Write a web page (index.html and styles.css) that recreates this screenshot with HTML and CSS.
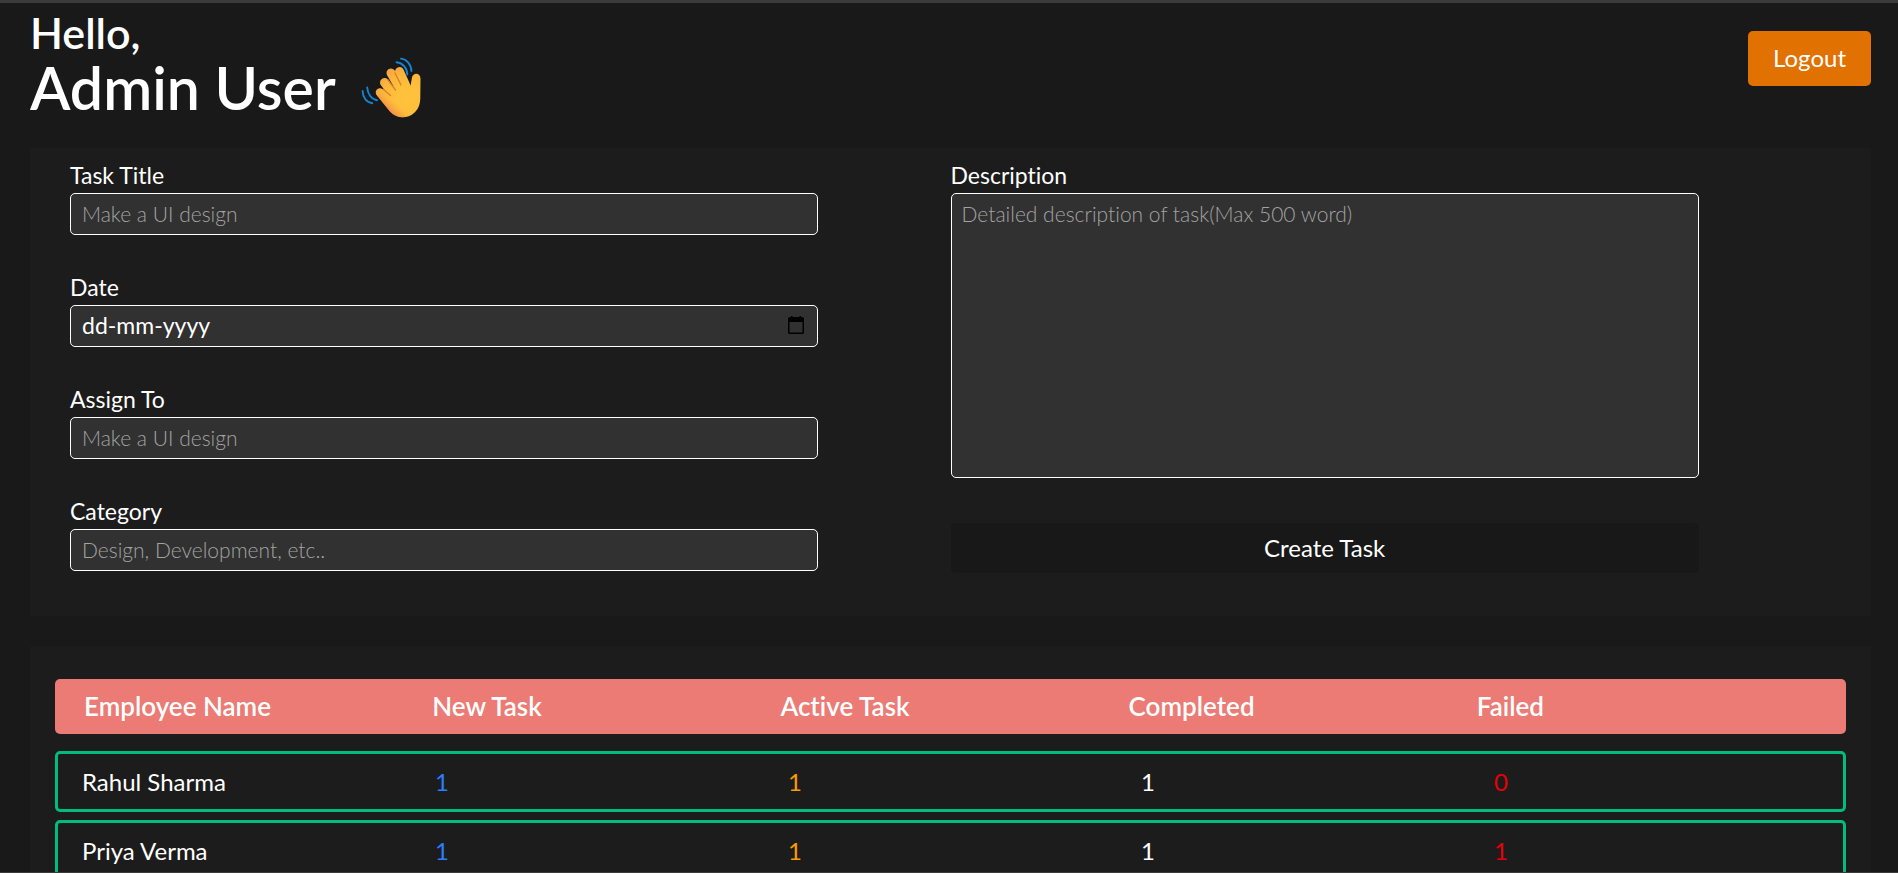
FILE: index.html
```html
<!DOCTYPE html>
<html lang="en">
<head>
<meta charset="utf-8">
<title>Admin Dashboard</title>
<link rel="stylesheet" href="styles.css">
</head>
<body>
<header class="header">
  <h1 class="greeting">
    <span class="greeting-hello">Hello,</span>
    <span class="greeting-name">Admin User
      <svg class="wave" viewBox="0 0 60 62" aria-hidden="true">
        <defs>
          <radialGradient id="palm" gradientUnits="userSpaceOnUse" cx="46" cy="42" r="34">
            <stop offset="0" stop-color="#ffc23c"/>
            <stop offset="0.45" stop-color="#ffbf3c"/>
            <stop offset="0.75" stop-color="#fbb53c"/>
            <stop offset="1" stop-color="#f6a544"/>
          </radialGradient>
          <linearGradient id="edge" gradientUnits="userSpaceOnUse" x1="24" y1="54" x2="33" y2="44">
            <stop offset="0" stop-color="#f07b4e"/>
            <stop offset="1" stop-color="#f5a03f" stop-opacity="0"/>
          </linearGradient>
        </defs>
        <g fill="none" stroke="#1583d3" stroke-width="1.9" stroke-linecap="round">
          <path d="M40 1.6C45.500 2 50.400 7.500 50.400 14"/>
          <path d="M35.500 5.200C41.500 5.600 46.300 11 46.300 17.500"/>
          <path d="M1.600 34C1.800 40.500 5.500 45.500 11.300 46.300"/>
          <path d="M6.200 30.500C6.600 37 10.500 42.300 16 43.300"/>
        </g>
        <g fill="none" stroke="url(#palm)" stroke-linecap="round">
          <path stroke-width="8.600" d="M19 35.500L37 50"/>
          <path stroke-width="9" d="M23.500 25.500L39 46"/>
          <path stroke-width="9" d="M30 16L44 40"/>
          <path stroke-width="9" d="M38.500 14.500L49 38"/>
        </g>
        <path fill="url(#palm)" d="M16 38.500L29 54.500C35 61.500 46 62.500 53 56C58 51.500 59.500 46 59.300 39L59.500 21.500C59.500 15.500 51.500 15 50.800 21.500L49.500 29C48.800 31.500 46.500 31 45.500 29L39 27L25 32Z"/>
        <path fill="url(#edge)" d="M16 38.500L29 54.500C35 61.500 46 62.500 53 56L38 46L22 35Z"/>
        <g fill="none" stroke="#d98222" stroke-width="1.300" stroke-linecap="round">
          <path d="M22.500 32.500L29.500 38.500"/>
          <path d="M27 23L34.500 33"/>
          <path d="M34 16L40 28"/>
        </g>
      </svg>
    </span>
  </h1>
  <button class="logout" type="button">Logout</button>
</header>

<main class="content">
  <form class="panel task-form">
    <div class="column">
      <div class="field">
        <label for="title">Task Title</label>
        <input class="control" id="title" type="text" placeholder="Make a UI design">
      </div>
      <div class="field">
        <label for="date">Date</label>
        <div class="control date-control">
          <input class="date-input" id="date" type="text" placeholder="dd-mm-yyyy">
          <button class="date-button" type="button" aria-label="Open calendar">
            <svg class="calendar" viewBox="0 0 16 18" aria-hidden="true">
              <path fill="#000" fill-rule="evenodd" d="M3 0H4.500V1H11.500V0H13V1H14.500Q16 1 16 2.500V16.500Q16 18 14.500 18H1.500Q0 18 0 16.500V2.500Q0 1 1.500 1H3ZM1.500 6V16.500H14.500V6Z"/>
            </svg>
          </button>
        </div>
      </div>
      <div class="field">
        <label for="assign">Assign To</label>
        <input class="control" id="assign" type="text" placeholder="Make a UI design">
      </div>
      <div class="field">
        <label for="category">Category</label>
        <input class="control" id="category" type="text" placeholder="Design, Development, etc..">
      </div>
    </div>
    <div class="column">
      <label for="description">Description</label>
      <textarea class="control description" id="description" rows="10" placeholder="Detailed description of task(Max 500 word)"></textarea>
      <button class="create" type="submit">Create Task</button>
    </div>
  </form>

  <section class="panel employees">
    <table class="table">
      <thead class="table-head">
        <tr class="head-row">
          <th scope="col">Employee Name</th><th scope="col">New Task</th><th scope="col">Active Task</th><th scope="col">Completed</th><th scope="col">Failed</th>
        </tr>
      </thead>
      <tbody class="table-body">
        <tr class="row">
          <td>Rahul Sharma</td><td class="new">1</td><td class="active">1</td><td>1</td><td class="failed">0</td>
        </tr>
        <tr class="row">
          <td>Priya Verma</td><td class="new">1</td><td class="active">1</td><td>1</td><td class="failed">1</td>
        </tr>
      </tbody>
    </table>
  </section>
</main>
</body>
</html>
```
FILE: styles.css
```css
* {
  box-sizing: border-box;
}

body {
  display: flex;
  flex-direction: column;
  height: 100vh;
  margin: 0;
  overflow: hidden;
  border-top: 3px solid #3b3b3b;
  border-bottom: 1px solid #3b3b3b;
  background: #191919;
  color: #fff;
  font-family: Lato, "Liberation Sans", sans-serif;
  font-size: 23px;
  font-variant-ligatures: none;
}

input,
textarea,
button {
  color: inherit;
  font-family: inherit;
  font-variant-ligatures: inherit;
}

.header {
  display: flex;
  align-items: center;
  justify-content: space-between;
  padding: 0 27px 35px 30px;
}

.greeting {
  display: flex;
  flex-direction: column;
  margin: 0;
  font-weight: 600;
}

.greeting-hello {
  font-size: 43px;
  line-height: 60px;
}

.greeting-name {
  display: flex;
  align-items: center;
  gap: 25px;
  height: 50px;
  font-size: 59px;
  line-height: 50px;
}

.wave {
  width: 60px;
  height: 62px;
}

.logout {
  padding: 0 25px 2px;
  border: 0;
  border-radius: 5px;
  background: #e17100;
  font-size: 24px;
  line-height: 53px;
}

.content {
  display: flex;
  flex: 1;
  flex-direction: column;
  gap: 30px;
  min-height: 0;
  padding: 0 27px 0 30px;
}

.panel {
  flex-shrink: 0;
  background: #1c1c1c;
}

.task-form {
  display: grid;
  grid-template-columns: 1fr 1fr;
  padding: 12px 40px 43px;
}

.column {
  display: flex;
  flex-direction: column;
  width: 85%;
}

.column label {
  display: block;
  margin-bottom: 2px;
  line-height: 31px;
}

.field + .field {
  margin-top: 37px;
}

.control {
  display: block;
  width: 100%;
  height: 42px;
  padding: 0 11px 2px;
  border: 1px solid #fff;
  border-radius: 5px;
  background: #313131;
  font-size: 21px;
  font-weight: 300;
}

.control::placeholder {
  color: #a3a3a3;
  opacity: 1;
}

.date-control {
  display: flex;
  align-items: center;
  justify-content: space-between;
}

.date-input {
  flex: 1;
  padding: 0;
  border: 0;
  background: transparent;
  font-size: 23px;
}

.date-input::placeholder {
  color: #fff;
  opacity: 1;
}

.date-button {
  display: flex;
  padding: 0 2px;
  border: 0;
  background: transparent;
}

.calendar {
  width: 16px;
  height: 18px;
}

.description {
  height: 285px;
  padding: 6px 10px;
  line-height: 28px;
  resize: none;
}

.create {
  margin-top: 45px;
  padding: 0;
  border: 0;
  border-radius: 5px;
  background: #181818;
  font-size: 24px;
  line-height: 50px;
}

.employees {
  padding: 33px 25px;
}

.table,
.table-head {
  display: block;
}

.table-body {
  display: flex;
  flex-direction: column;
  gap: 8px;
  margin-top: 17px;
}

.head-row,
.row {
  display: grid;
  grid-template-columns: repeat(5, 1fr);
  border-radius: 5px;
}

.head-row {
  padding: 0 25px;
  background: #eb7b74;
  font-size: 26px;
  line-height: 55px;
}

.head-row th {
  padding: 0 4px;
  font-weight: 600;
  text-align: left;
}

.row {
  padding: 0 10px;
  border: 3px solid #00bc7d;
  font-size: 24px;
  line-height: 55px;
}

.row td {
  padding: 0 14px;
}

.new {
  color: #2b7fff;
}

.active {
  color: #f99c00;
}

.failed {
  color: #e7000b;
}
```
